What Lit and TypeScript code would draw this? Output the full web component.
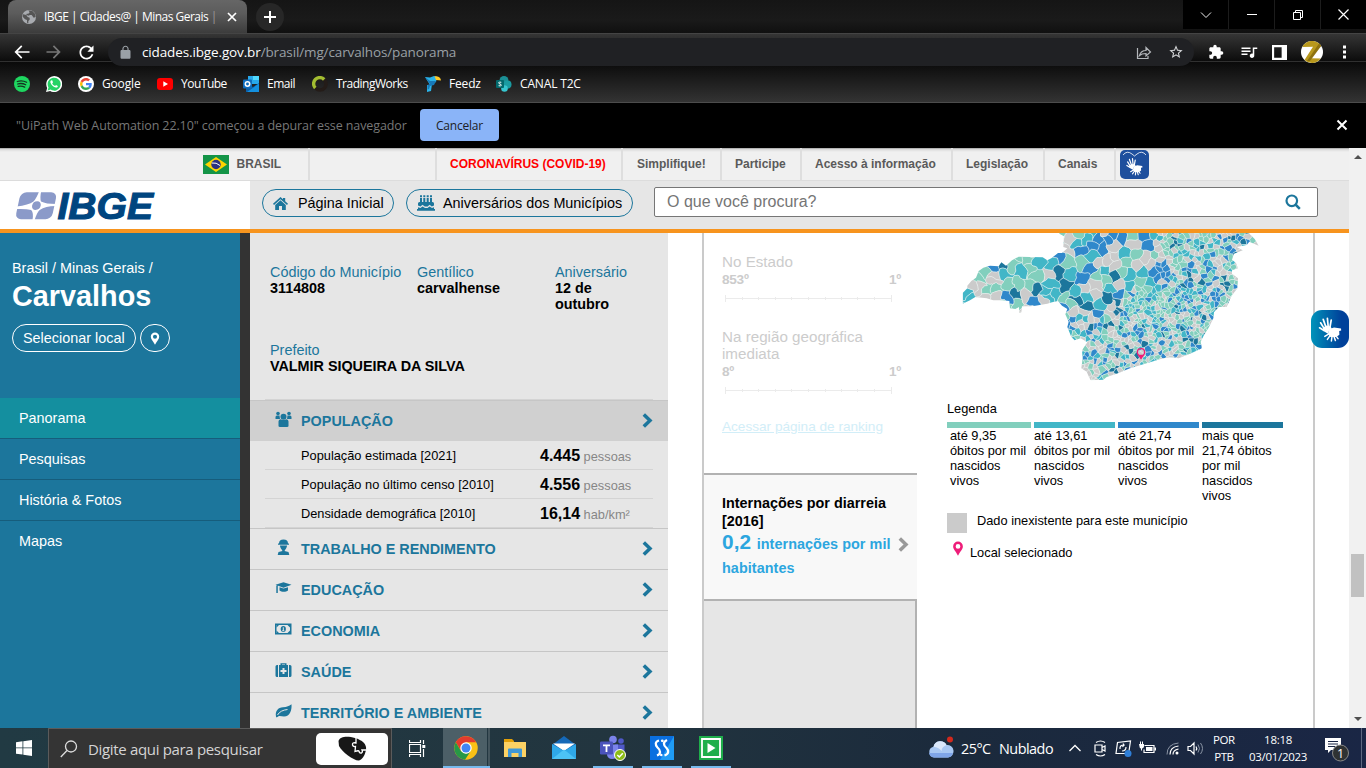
import { LitElement, html, svg, css } from "lit";
import { customElement } from "lit/decorators.js";

type Pt = [number, number];

const G = "#82cfbd", T = "#42b6c7", B = "#3088cb", D = "#1c769c", N = "#cbcbcb";

const OUTLINE: Pt[] = [
  [388, 10], [388, 26], [402, 34], [400, 66], [412, 70], [396, 84], [384, 84], [364, 100], [352, 106], [338, 97], [300, 96],
  [266, 95], [246, 106], [228, 122], [214, 112], [206, 124], [180, 122], [160, 128], [146, 138], [138, 158], [124, 168],
  [112, 182], [112, 190], [98, 204], [98, 236], [120, 226], [136, 216], [170, 220], [190, 226], [216, 226], [238, 228],
  [240, 250], [256, 252], [267, 246], [268, 264], [274, 262], [276, 244], [300, 244], [316, 242], [352, 236], [366, 232],
  [384, 228], [396, 242], [412, 252], [406, 268], [416, 290], [412, 306], [424, 336], [434, 346], [452, 340], [472, 352],
  [456, 376], [458, 400], [454, 430], [470, 440], [476, 454], [482, 466], [520, 464], [530, 456], [560, 446], [600, 430],
  [660, 412], [700, 400], [720, 397], [746, 400], [780, 386], [816, 370], [812, 350], [822, 330], [836, 308], [850, 280],
  [852, 262], [866, 246], [890, 246], [904, 214], [922, 190], [924, 160], [906, 146], [906, 136], [924, 130], [918, 114],
  [906, 104], [912, 86], [938, 76], [920, 66], [950, 60], [958, 50], [986, 62], [974, 42], [956, 24], [956, 10],
];

const PLACES: [number, number, string][] = [
  [112, 210, T], [128, 182, N], [152, 184, N], [160, 145, G], [195, 150, N], [217, 122, D], [200, 190, G], [222, 150, T],
  [250, 118, G], [262, 180, G], [275, 132, T], [300, 185, G], [320, 150, G], [328, 110, T], [230, 214, B], [195, 214, N],
  [258, 204, D], [264, 238, G], [292, 210, N], [318, 198, D], [316, 230, B], [348, 200, T], [360, 150, N], [370, 118, T],
  [340, 232, N], [378, 210, T], [384, 142, D], [366, 178, T], [120, 222, T], [292, 104, G], [235, 180, G], [175, 190, G],
  [150, 160, G], [302, 130, G], [355, 218, T], [195, 168, N],
  [395, 22, G], [420, 45, N], [440, 60, T], [448, 78, B], [415, 105, G], [384, 94, B], [472, 40, T], [505, 40, B], [532, 42, B],
  [520, 66, B], [574, 36, B], [490, 90, T], [458, 115, G], [420, 148, T], [455, 162, B], [482, 130, B], [410, 184, D],
  [400, 220, G], [436, 224, D], [470, 244, D], [422, 238, G], [462, 192, N], [500, 215, N], [500, 180, N], [525, 140, T],
  [548, 90, N], [555, 122, N], [585, 85, T], [620, 90, G], [610, 55, N], [660, 60, B], [680, 90, G], [555, 158, D],
  [600, 150, T], [570, 182, N], [535, 215, D], [568, 206, B], [640, 140, T], [645, 30, B], [605, 34, G], [430, 262, N],
  [460, 262, N], [505, 270, B], [512, 240, T], [545, 195, T], [505, 150, G], [550, 30, B], [490, 60, B], [536, 104, N],
  [735, 52, D], [765, 50, G], [800, 35, N], [712, 72, G], [690, 42, T], [718, 32, G], [815, 68, D], [786, 70, G],
  [840, 60, T], [860, 84, G], [886, 45, B], [930, 42, B], [968, 50, G], [910, 78, B], [890, 98, B], [856, 130, B],
  [832, 134, B], [700, 150, B], [684, 160, B], [716, 146, B], [690, 132, B], [882, 156, D], [880, 178, D], [908, 172, G],
  [900, 205, G], [875, 235, G], [765, 135, B], [718, 372, T], [650, 330, G], [655, 375, B], [640, 356, D], [790, 360, B],
  [806, 366, B], [730, 258, T], [585, 266, B], [545, 298, D], [560, 310, G], [755, 68, G], [770, 30, G], [876, 66, B],
];

function makeRandom(seed: number) {
  let s = seed;
  return () => {
    s = (s * 1664525 + 1013904223) >>> 0;
    return s / 4294967296;
  };
}

function spacing(x: number, y: number): number {
  if (x < 400) return 30;
  if (y < 190 && x < 670) return 26;
  if (x < 560 && y < 280) return 20;
  if (x < 560 && y < 330) return 13;
  if (y < 190) return 11.5;
  if (x > 560 && y < 350) return 8.6;
  return 10;
}

function tint(x: number, y: number, r: number): string {
  const near = (cx: number, cy: number, d: number) => Math.hypot(x - cx, y - cy) < d;
  if (near(840, 205, 30) || near(700, 150, 38)) return r < 0.7 ? B : r < 0.84 ? T : N;
  if (near(660, 225, 75)) return r < 0.5 ? G : r < 0.76 ? T : r < 0.92 ? N : B;
  if (y < 190) return r < 0.36 ? N : r < 0.64 ? G : r < 0.78 ? T : r < 0.91 ? B : D;
  return r < 0.34 ? N : r < 0.6 ? G : r < 0.77 ? T : r < 0.93 ? B : D;
}

/** Bends a point so that borders meander instead of running straight. */
function bend([x, y]: Pt): Pt {
  const a = x < 560 && y < 250 ? 4.2 : 2.3;
  return [
    x + a * (Math.sin(y / 6.1 + x / 17) + 0.7 * Math.sin(x / 4.3 - y / 9.7)),
    y + a * (Math.sin(x / 6.7 - y / 15) + 0.7 * Math.sin(y / 4.7 + x / 11.3)),
  ];
}

/** Splits the state into one polygon per municipality (nearest-seat cells). */
function municipalities(): { points: string; fill: string }[] {
  const rand = makeRandom(31148);
  const sites: { x: number; y: number; c: string; m: number }[] = PLACES.map(([x, y, c]) => ({
    x, y, c, m: y < 250 && x < 670 ? 25 : 11,
  }));
  for (let i = 0; i < 14000; i++) {
    const x = 90 + rand() * 900, y = 15 + rand() * 460, r = rand();
    const base = spacing(x, y);
    const d = base * (base > 18 ? 1 : 0.65 + 0.8 * rand());
    if (sites.every((s) => Math.hypot(s.x - x, s.y - y) > Math.max(d, s.m))) {
      sites.push({ x, y, c: tint(x, y, r), m: d * 0.8 });
    }
  }
  return sites.map((a) => {
    let poly: Pt[] = [[a.x - 60, a.y - 60], [a.x + 60, a.y - 60], [a.x + 60, a.y + 60], [a.x - 60, a.y + 60]];
    for (const b of sites) {
      if (a === b || Math.abs(a.x - b.x) > 110 || Math.abs(a.y - b.y) > 110) continue;
      const nx = b.x - a.x, ny = b.y - a.y;
      const k = (nx * (a.x + b.x) + ny * (a.y + b.y)) / 2;
      const out: Pt[] = [];
      for (let i = 0; i < poly.length; i++) {
        const p = poly[i], q = poly[(i + 1) % poly.length];
        const dp = nx * p[0] + ny * p[1] - k, dq = nx * q[0] + ny * q[1] - k;
        if (dp <= 0) out.push(p);
        if (dp < 0 !== dq < 0) {
          const t = dp / (dp - dq);
          out.push([p[0] + t * (q[0] - p[0]), p[1] + t * (q[1] - p[1])]);
        }
      }
      poly = out;
    }
    const fine: Pt[] = [];
    poly.forEach((p, i) => {
      const q = poly[(i + 1) % poly.length];
      for (let k = 0; k < 4; k++) fine.push(bend([p[0] + (k / 4) * (q[0] - p[0]), p[1] + (k / 4) * (q[1] - p[1])]));
    });
    return { points: fine.map((p) => `${p[0].toFixed(1)},${p[1].toFixed(1)}`).join(" "), fill: a.c };
  });
}

const CELLS = municipalities();

const hands = svg`
  <path d="M7.2 12.6 3.6 6.8M9 11.2 6.2 3.4M11.2 10.6 10.4 2.4M13 11 14.2 4.2M7 14.5 2.6 11.8" stroke="#fff" stroke-width="1.7" stroke-linecap="round" fill="none"/>
  <path d="M6 12 9 9.600l4.600.8 1.400 2.600-2.600.6-1.400 4.200-3.800-2.200z" fill="#fff"/>
  <path d="M12 13.200 17 11.500l7 1 .2 2-2 .6.200 3.600-3.200 2.400-5.800-.2-2.400-3z" fill="#fff"/>
  <path d="M12.400 17.600 7.800 20.400M13.200 19.400 10.400 23.400M15 20.400 14.400 25M17 20.400 18.400 24.600M18.600 19.400 21 22.600" stroke="#fff" stroke-width="1.500" stroke-linecap="round" fill="none"/>`;

const icon = (size: number, box: string, body: unknown) =>
  html`<svg width=${size} height=${size} viewBox=${box} aria-hidden="true">${body}</svg>`;
const glyph = (size: number, d: string, fill = "#fff") => icon(size, "0 0 24 24", svg`<path fill=${fill} d=${d}/>`);

const chevron = html`<svg width="11" height="15" viewBox="0 0 11 15"><path d="M1.800 1.500 8 7.500l-6.200 6" fill="none" stroke="currentColor" stroke-width="3.500"/></svg>`;

const pin = (w: number, h: number, fill: string) =>
  html`<svg width=${w} height=${h} viewBox="0 0 12 16"><path fill=${fill} fill-rule="evenodd" d="M6 .6A5.200 5.200 0 0 0 .8 5.800C.8 8.600 3.600 11 6 15.600 8.400 11 11.200 8.600 11.200 5.800A5.200 5.200 0 0 0 6 .6zM6 3.300a2.500 2.500 0 1 1 0 5 2.500 2.500 0 0 1 0-5z"/></svg>`;

@customElement("browser-chrome")
class BrowserChrome extends LitElement {
  static styles = css`
    :host { display: block; width: 1366px; height: 148px; background: #000; font-family: "Open Sans", "Noto Sans", sans-serif; color: #fff; font-size: 12px; }
    svg { display: block; flex: none; }
    .strip { display: flex; height: 33px; background: linear-gradient(#151515, #1a1a1a 60%, #101010); }
    .tab { margin-left: 8px; width: 239px; height: 33px; box-sizing: border-box; border-radius: 8px 8px 0 0; background: linear-gradient(#666, #5c5c5c 40%, #3c3c3c); display: grid; grid-template-columns: 23px 182px 12px; align-items: center; padding-left: 13px; }
    .title { white-space: nowrap; letter-spacing: -0.52px; }
    .dim { color: #9a9a9a; }
    .plus { margin: 3px 0 0 9px; width: 28px; height: 28px; border-radius: 50%; background: #272727; display: grid; place-items: center; }
    .controls { margin-left: auto; display: grid; grid-template-columns: repeat(4, 45px); column-gap: 1px; height: 29px; background: #1c1c1c; }
    .control { background: #000; display: grid; place-items: center; }
    .bars { height: 70px; box-sizing: border-box; border-top: 1px solid #444; border-bottom: 1px solid #4c4c4c; background: linear-gradient(#353535, #0c0c0c 27px, #303030 27px, #303030 28px, #0a0a0a 28px, #333 68px); }
    .toolbar { display: grid; grid-template-columns: 32px 32px 32px 1086px 172px; padding: 4px 0 0 12px; height: 28px; align-items: center; }
    .omnibox { height: 28px; border-radius: 14px; background: #202124; display: flex; align-items: center; }
    .lock { margin: 0 9px 0 10px; }
    .url { font-size: 13.500px; color: #9aa0a6; letter-spacing: -0.13px; white-space: nowrap; }
    .host { color: #fff; }
    .actions { margin-left: auto; display: flex; gap: 16px; margin-right: 10px; }
    .tools { display: grid; grid-template-columns: 32px 32px 29px 35px 24px; width: 160px; padding-left: 14px; align-items: center; }
    .marks { display: grid; grid-template-columns: 32px 32px 79px 86px 69px 113px 71px 100px; padding: 0 0 0 14px; height: 35px; align-items: center; }
    .mark { display: flex; align-items: center; gap: 8px; white-space: nowrap; letter-spacing: -0.16px; }
    .tight { letter-spacing: -0.5px; }
    .info { height: 45px; box-sizing: border-box; display: flex; align-items: center; padding: 0 16px 1px; }
    .message { color: #777; font-size: 12.500px; letter-spacing: -0.1px; width: 404px; white-space: nowrap; }
    .cancel { width: 79px; height: 32px; border-radius: 4px; background: #8ab4f8; color: #202124; display: grid; place-items: center; letter-spacing: -0.2px; }
    .close { margin-left: auto; margin-right: 2px; }
  `;

  render() {
    return html`
      <div class="strip">
        <div class="tab">
          ${icon(16, "0 0 24 24", svg`<circle cx="12" cy="12" r="10.500" fill="#a8abb0"/><path fill="#555" d="M3 8l5 1 2 3 3 1v3l-2 2v3.500l-2-1v-4l-3-1-3.500-4zM11 2l2 3-2 2H8.500L8 9l4 1 1-1h3l3 4 3-1-1-5-4-4z"/>`)}
          <span class="title">IBGE | Cidades@ | Minas Gerais <span class="dim">|</span></span>
          ${icon(12, "0 0 12 12", svg`<path d="M2 2l8 8M10 2l-8 8" stroke="#fff" stroke-width="1.700"/>`)}
        </div>
        <div class="plus">${icon(12, "0 0 12 12", svg`<path d="M6 0v12M0 6h12" stroke="#fff" stroke-width="2"/>`)}</div>
        <div class="controls">
          <div class="control">${icon(12, "0 0 12 12", svg`<path d="M1 3.500l5 5 5-5" stroke="#eee" fill="none"/>`)}</div>
          <div class="control">${icon(10, "0 0 10 10", svg`<path d="M0 4.500h10" stroke="#fff"/>`)}</div>
          <div class="control">${icon(10, "0 0 10 10", svg`<path d="M.5 2.500h7v7h-7zM2.500 2.500v-2h7v7h-2" stroke="#fff" fill="none"/>`)}</div>
          <div class="control">${icon(11, "0 0 11 11", svg`<path d="M.5.500l10 10M10.500.500l-10 10" stroke="#fff" stroke-width="1.200"/>`)}</div>
        </div>
      </div>
      <div class="bars">
        <div class="toolbar">
          ${glyph(20, "M21 11H6.830l5.590-5.590L11 4l-8 8 8 8 1.410-1.410L6.830 13H21v-2z")}
          ${glyph(20, "M12 4l-1.410 1.410L16.170 11H3v2h13.170l-5.580 5.590L12 20l8-8z", "#777")}
          ${glyph(21, "M17.650 6.350C16.200 4.900 14.210 4 12 4c-4.420 0-7.990 3.580-7.990 8s3.570 8 7.990 8c3.730 0 6.840-2.550 7.730-6h-2.080c-.82 2.330-3.040 4-5.650 4-3.310 0-6-2.690-6-6s2.690-6 6-6c1.660 0 3.140.69 4.220 1.780L13 11h7V4l-2.350 2.350z")}
          <div class="omnibox">
            <span class="lock">${glyph(15, "M18 8h-1V6c0-2.760-2.240-5-5-5S7 3.240 7 6v2H6c-1.100 0-2 .9-2 2v10c0 1.100.9 2 2 2h12c1.100 0 2-.9 2-2V10c0-1.100-.9-2-2-2zM15.100 8H8.900V6c0-1.710 1.390-3.100 3.100-3.100s3.100 1.390 3.100 3.100v2z", "#9aa0a6")}</span>
            <span class="url"><span class="host">cidades.ibge.gov.br</span>/brasil/mg/carvalhos/panorama</span>
            <span class="actions">
              ${icon(16, "0 0 16 16", svg`<path d="M1.500 4v10.500H12V12M3.500 11.500C4.500 8 7 6.500 10 6.500V3.500L14.500 8 10 12V9.500c-3 0-5 .5-6.500 2z" fill="none" stroke="#b4b7bb" stroke-width="1.200"/>`)}
              ${glyph(16, "M22 9.240l-7.190-.62L12 2 9.190 8.630 2 9.240l5.460 4.730L5.820 21 12 17.270 18.180 21l-1.630-7.030L22 9.240zM12 15.400l-3.760 2.270 1-4.280-3.320-2.880 4.380-.38L12 6.100l1.710 4.040 4.380.38-3.320 2.880 1 4.280L12 15.400z", "#d4d6d8")}
            </span>
          </div>
          <div class="tools">
            ${glyph(16, "M20.500 11H19V7c0-1.100-.9-2-2-2h-4V3.500a2.500 2.500 0 0 0-5 0V5H4c-1.100 0-1.990.9-1.990 2v3.800H3.500c1.490 0 2.700 1.210 2.700 2.700s-1.210 2.700-2.700 2.700H2V20c0 1.100.9 2 2 2h3.800v-1.500c0-1.490 1.210-2.700 2.700-2.700s2.700 1.210 2.700 2.700V22H17c1.100 0 2-.9 2-2v-4h1.500a2.500 2.500 0 0 0 0-5z")}
            ${glyph(18, "M14 6H2v2h12V6zm0 4H2v2h12v-2zM2 16h8v-2H2v2zM17 6v8.180c-.31-.11-.65-.18-1-.18-1.660 0-3 1.340-3 3s1.340 3 3 3 3-1.340 3-3V8h4V6h-6z")}
            ${icon(15, "0 0 14 14", svg`<path fill="#fff" fill-rule="evenodd" d="M0 0h14v14H0zM2 2v10h7V2z"/>`)}
            ${icon(22, "0 0 22 22", svg`<circle cx="11" cy="11" r="11" fill="#fff"/><path d="M2 4.600A11 11 0 0 1 20 4.600L10 17.200l9.800.4A11 11 0 0 1 3.500 19L12 5.800 1.500 6z" fill="#b8981c"/><path d="M18 2.500 6 20h3L20.200 5z" fill="#8d7210"/>`)}
            ${icon(16, "0 0 16 16", svg`<path fill="#fff" d="M7 1.500h3v3H7zM7 6.500h3v3H7zM7 11.500h3v3H7z"/>`)}
          </div>
        </div>
        <div class="marks">
          <span class="mark">${icon(16, "0 0 16 16", svg`<circle cx="8" cy="8" r="8" fill="#1ed760"/><path d="M3.300 5.500c3-1 6.500-.7 9.300.8M3.700 8c2.600-.8 5.600-.5 8 .8M4.100 10.400c2.200-.6 4.600-.4 6.600.7" fill="none" stroke="#14351f" stroke-width="1.300" stroke-linecap="round"/>`)}</span>
          <span class="mark">${icon(16, "0 0 16 16", svg`<path d="M0 16l1.200-4.100A8 8 0 1 1 4.200 15z" fill="#fff"/><path d="M1.600 14.400l.9-3A6.500 6.500 0 1 1 4.600 13.600z" fill="#25d366"/><path d="M5.600 4.300c-.8 0-1.500 1.200-1.200 2.300.7 2.500 3 4.700 5.500 5 1 .1 2-.6 1.900-1.600l-1.800-.9-.9 1c-1.300-.5-2.400-1.500-2.900-2.800l.8-.9-.6-1.900z" fill="#fff"/>`)}</span>
          <span class="mark">${icon(16, "0 0 48 48", svg`<circle cx="24" cy="24" r="24" fill="#fff"/><g transform="translate(6 6) scale(.75)"><path fill="#EA4335" d="M24 9.500c3.540 0 6.710 1.220 9.210 3.600l6.850-6.850C35.900 2.380 30.470 0 24 0 14.620 0 6.510 5.380 2.560 13.220l7.980 6.190C12.430 13.720 17.740 9.500 24 9.500z"/><path fill="#4285F4" d="M46.980 24.550c0-1.570-.15-3.090-.38-4.550H24v9.020h12.940c-.58 2.960-2.260 5.480-4.780 7.180l7.730 6c4.510-4.180 7.090-10.360 7.090-17.650z"/><path fill="#FBBC05" d="M10.530 28.590a14.500 14.500 0 0 1 0-9.180l-7.980-6.190a24 24 0 0 0 0 21.560l7.980-6.190z"/><path fill="#34A853" d="M24 48c6.480 0 11.930-2.130 15.890-5.810l-7.730-6c-2.150 1.450-4.920 2.300-8.160 2.300-6.260 0-11.570-4.220-13.470-9.910l-7.980 6.190C6.510 42.620 14.620 48 24 48z"/></g>`)}Google</span>
          <span class="mark tight">${icon(16, "0 0 16 16", svg`<rect y="2" width="16" height="12" rx="3" fill="#f00"/><path d="M6.300 5.300v5.400L11 8z" fill="#fff"/>`)}YouTube</span>
          <span class="mark tight">${icon(16, "0 0 16 16", svg`<path fill="#28a8ea" d="M5 0h11v8H5z"/><path fill="#50d9ff" d="M10 0h6v4h-6z"/><path fill="#0a5ea8" d="M3 7l7 4 6-4v9H3z"/><path fill="#1490df" d="M16 7.500V16H4z"/><rect y="3.500" width="9" height="9" rx="1" fill="#0f6cbd"/><circle cx="4.500" cy="8" r="2.200" fill="none" stroke="#fff" stroke-width="1.500"/>`)}Email</span>
          <span class="mark tight">${icon(16, "0 0 16 16", svg`<circle cx="8" cy="8" r="6" fill="none" stroke="#241c18" stroke-width="3.600"/><path d="M3.300 12A6 6 0 0 1 12.200 3.500" fill="none" stroke="#a3bd31" stroke-width="3.400"/>`)}TradingWorks</span>
          <span class="mark">${icon(16, "0 0 16 16", svg`<path fill="#2bb3e8" d="M0 1 5 1.500 9 0l3 1-1 5-4 2-1 7-4 1V9h3z"/><path fill="#1779b8" d="M0 1l5 4h6l-2 4-4 1-1 3-1.500.5V9L5 8z"/><path fill="#ffc928" d="M9.500.2C13 0 15.500 1 16 4.500L11 4z"/>`)}Feedz</span>
          <span class="mark">${icon(16, "0 0 16 16", svg`<circle cx="8" cy="4.500" r="4.500" fill="#1b8f95"/><circle cx="11.500" cy="8.500" r="4" fill="#1a9ba1"/><circle cx="8.500" cy="12.500" r="3.300" fill="#37c6d0"/><rect y="4" width="8" height="8" rx="1" fill="#03696d"/><path d="M5.300 6.300q-2.600-.8-2.600.5 0 .9 1.300 1.200t1.300 1.200q0 1.300-2.700.5" fill="none" stroke="#fff" stroke-width="1"/>`)}CANAL T2C</span>
        </div>
      </div>
      <div class="info">
        <span class="message">"UiPath Web Automation 22.10" começou a depurar esse navegador</span>
        <span class="cancel">Cancelar</span>
        <span class="close">${icon(12, "0 0 12 12", svg`<path d="M1.500 1.500l9 9M10.500 1.500l-9 9" stroke="#fff" stroke-width="2"/>`)}</span>
      </div>`;
  }
}

@customElement("ibge-map")
class IbgeMap extends LitElement {
  static styles = css`
    :host { display: block; }
    .state { display: block; width: 300px; height: 150px; }
  `;
  render() {
    return html`<svg class="state" viewBox="90 24 900 450">
      <defs><clipPath id="border"><polygon points=${OUTLINE.map((p) => p.join(",")).join(" ")}/></clipPath></defs>
      <g clip-path="url(#border)" stroke="#ecf5f3" stroke-opacity=".8" stroke-width="1.800" stroke-linejoin="round">
        ${CELLS.map((c) => svg`<polygon points=${c.points} fill=${c.fill}/>`)}
      </g>
      <path d="M633 371c-7 0-11 5-11 11 0 7 6 10 11 18 5-8 11-11 11-18 0-6-4-11-11-11z" fill="none" stroke="#ee1d79" stroke-width="4"/>
      <path d="M626 389h14l-7 13z" fill="#ee1d79"/>
    </svg>`;
  }
}

@customElement("ibge-page")
class IbgePage extends LitElement {
  static styles = css`
    :host { display: flex; flex-direction: column; width: 1349px; height: 580px; position: relative; overflow: hidden; background: #fff; font-family: "Liberation Sans", Arial, sans-serif; font-size: 14.400px; color: #000; }
    svg { display: block; flex: none; overflow: visible; }
    .gov { height: 33px; box-sizing: border-box; border-bottom: 1px solid #dcdcdc; background: linear-gradient(#8f8f8f, #d8d8d8 1px, #f0f0f0 4px); display: grid; grid-template-columns: 310px 127px 186px 99px 80px 151px 92px 71px 1fr; font-size: 12px; font-weight: bold; color: #5a5a5a; flex: none; }
    .cell { border-right: 2px solid #dedede; padding-left: 13px; line-height: 32px; white-space: nowrap; }
    .cell:first-child { padding-left: 203px; display: flex; align-items: center; gap: 7.500px; }
    .alert { color: #f00; }
    .wide { padding-left: 14px; }
    .access { padding: 2px 0 0 4px; }
    .head { height: 48px; display: flex; background: #e6e6e6; border-bottom: 4px solid #f7941e; flex: none; }
    .brand { width: 250px; background: #fff; box-sizing: border-box; padding: 9px 0 0 15px; }
    .word { font: italic bold 37.500px "Liberation Sans", Arial, sans-serif; }
    .pill { box-sizing: border-box; height: 28px; border: 1px solid #1c769c; border-radius: 14px; display: flex; align-items: center; margin: 8px 0 0 12px; white-space: nowrap; }
    .start { width: 132px; padding-left: 10px; gap: 10px; }
    .births { width: 227px; padding-left: 10px; gap: 8px; }
    .search { margin: 6px 0 0 21px; width: 664px; height: 30px; box-sizing: border-box; border: 1px solid #767676; border-radius: 2px; background: #fff; padding: 0 16px 0 12px; display: flex; align-items: center; justify-content: space-between; font-size: 16px; color: #757575; }
    .body { flex: 1; display: grid; grid-template-columns: 250px 418px 34px 215px 398px; min-height: 0; }
    .side { border-right: 10px solid #333; background: #1c769c; color: #fff; }
    .where { height: 165px; box-sizing: border-box; padding: 27px 0 0 12px; }
    .trail { line-height: 17px; }
    .city { font-size: 28.800px; font-weight: bold; line-height: 34px; margin-top: 2px; }
    .row { display: flex; gap: 4px; margin-top: 11px; }
    .local { box-sizing: border-box; height: 28px; border: 1px solid #fff; border-radius: 14px; line-height: 26px; width: 124px; padding-left: 10px; white-space: nowrap; }
    .locate { box-sizing: border-box; height: 28px; width: 30px; border: 1px solid #fff; border-radius: 14px; display: grid; place-items: center; }
    .nav { height: 40px; line-height: 40px; padding-left: 19px; border-bottom: 1px solid #165d7c; }
    .nav:last-child { border: 0; }
    .on { background: #148f9f; }
    .facts { background: #e6e6e6; overflow: hidden; }
    .ids { height: 167px; margin: 0 15px; box-sizing: border-box; padding: 31px 0 0 5px; border-bottom: 1px solid #d4d4d4; }
    .trio { display: grid; grid-template-columns: 147px 138px 80px; height: 78px; line-height: 16px; }
    .mayor { line-height: 16px; }
    .key { color: #1c769c; }
    .val { font-weight: bold; letter-spacing: -0.03px; }
    .topic { height: 40px; border-top: 1px solid #c6c6c6; display: grid; grid-template-columns: 26px 341px 20px; padding-left: 25px; align-items: center; color: #1c769c; font-weight: bold; }
    .topic svg { margin-top: -3px; }
    .topic svg:last-child { margin-top: -1px; }
    .open { background: #d0d0d0; }
    .line { margin: 0 15px; height: 28px; border-bottom: 1px solid #d4d4d4; display: grid; grid-template-columns: 239px 1fr; padding-left: 36px; line-height: 29px; font-size: 12.800px; white-space: nowrap; }
    .num { font-size: 16px; font-weight: bold; }
    .unit { color: #868686; }
    .ranks { border-left: 2px solid #cacaca; display: flex; flex-direction: column; min-height: 0; }
    .faded { box-sizing: border-box; padding: 21px 15px 0 18px; color: #ccc; font-size: 15.200px; line-height: 17px; flex: none; border-bottom: 2px solid #b2b2b2; height: 242px; }
    .place { height: 17px; line-height: 16px; }
    .two { height: 35px; line-height: 17px; }
    .span { display: flex; justify-content: space-between; font-size: 13.600px; font-weight: bold; letter-spacing: -0.25px; height: 18px; line-height: 17px; padding-right: 1px; }
    .ruler { margin: 6px 0 0 3px; }
    .gap { height: 26px; }
    .link { color: #d2eef8; text-decoration: underline; font-size: 13.600px; margin-top: 25px; line-height: 16px; white-space: nowrap; }
    .pick { background: #f8f8f8; height: 124px; border-bottom: 2px solid #b2b2b2; flex: none; padding: 0 8px 0 18px; display: flex; align-items: center; justify-content: space-between; color: #999; }
    .pick svg { margin-top: 15px; }
    .what { width: 172px; font-weight: bold; color: #000; line-height: 18px; margin-top: -1px; white-space: nowrap; }
    .amount { color: #2ca6df; line-height: 24px; letter-spacing: 0.06px; }
    .big { font-size: 20.800px; margin-right: 1.500px; }
    .rest { flex: 1; background: #e6e6e6; border-right: 2px solid #b2b2b2; }
    .chart { border-right: 2px solid #cacaca; padding-left: 30px; font-size: 12.800px; }
    .chart ibge-map { margin-left: 13px; height: 168px; }
    .scale { display: grid; grid-template-columns: 84px 81px 81px 81px; column-gap: 3px; margin-top: 6px; line-height: 15px; height: 91px; white-space: nowrap; }
    .bar { height: 6px; }
    .c1 { background: #82cfbd; } .c2 { background: #42b6c7; } .c3 { background: #3088cb; } .c4 { background: #1c769c; }
    .first { padding-left: 3px; }
    .none { display: flex; gap: 10px; align-items: flex-start; line-height: 15px; height: 28px; }
    .swatch { width: 20px; height: 20px; background: #cbcbcb; }
    .mine { display: flex; gap: 6px; padding-left: 5px; line-height: 23px; }
    .vlibras { position: absolute; right: 0; top: 162px; width: 38px; height: 38px; border-radius: 11px; background: linear-gradient(90deg, #0093ba, #00419a 80%); display: grid; place-items: center; }
  `;

  render() {
    const blue = "#1c769c";
    const hole = "#e6e6e6";
    const topics: [string, unknown][] = [
      ["TRABALHO E RENDIMENTO", svg`<path fill=${blue} d="M4 4.500C4 2 5.500.5 8.500.5S13 2 13 4.500h1v1.300H3V4.500zM5 6.500h7c0 2-1 3-1.500 3.800L9.500 12l4 1 .8 3H2.700l.8-3 4-1-1-1.700C6 9.500 5 8.500 5 6.500z"/>`],
      ["EDUCAÇÃO", svg`<path fill=${blue} d="M.5 4.800 8.500 2.200l8 2.600-8 2.900zM4.500 7.200l4 1.300 4.500-1.300v3.300c-2 1.700-6.500 1.700-8.500 0zM1.300 5.500h1.500V13H1.300z"/>`],
      ["ECONOMIA", svg`<path fill=${blue} fill-rule="evenodd" d="M0 2.500h16.500v11H0zM1.500 4v8H15V4z"/><path fill=${blue} d="M1.500 4H4L1.500 6.500zM15 4h-2.500L15 6.500zM1.500 12H4L1.500 9.500zM15 12h-2.500L15 9.500z"/><ellipse cx="8.300" cy="8" rx="2.600" ry="3" fill=${blue}/><path stroke=${hole} d="M8.300 6.300v3.400M7.300 9.700h2"/>`],
      ["SAÚDE", svg`<path fill=${blue} fill-rule="evenodd" d="M5.500 3V1.200h6V3H13v12H4V3zM7 2.500V3h3v-.5zM.5 4.500Q.5 3 2 3h1v12H2q-1.500 0-1.500-1.500zM14 3h1q1.500 0 1.500 1.500v9Q16.500 15 15 15h-1z"/><path stroke="#e6e6e6" stroke-width="2" d="M8.500 6v6M5.500 9h6"/>`],
      ["TERRITÓRIO E AMBIENTE", svg`<path fill=${blue} d="M1 13.500C0 8 3 4.500 8 4.200 12 4 14 3 16.500 1.200 17 7 15 13.500 9 13.500c-2 0-4-.8-5.500-.3-1 .8-1.500 1.300-2.500 1z"/><path fill="none" stroke=${hole} d="M2.500 12C4.500 8.500 8 7 12.500 6.500"/>`],
    ];
    const ruler = html`<svg class="ruler" width="167" height="7" viewBox="0 0 167 7"><path d="M.5 0v7M166.500 0v7M0 3.500h167M17.500 2v3M33.500 2v3M50.500 2v3M66.500 2v3M83.500 2v3M100.500 2v3M116.500 2v3M132.500 2v3M149.500 2v3" stroke="#ebebeb" fill="none"/></svg>`;
    return html`
      <div class="gov">
        <div class="cell"><svg width="26" height="19" viewBox="0 0 26 19"><path fill="#149447" d="M0 0h26v19H0z"/><path fill="#ffd400" d="M2 9.500 13 2l11 7.500L13 17z"/><circle cx="13" cy="9.500" r="4.700" fill="#2b3180"/><path d="M8.800 8q4.500-.8 8.200 2.500" stroke="#fff" fill="none"/></svg>BRASIL</div>
        <div class="cell"></div>
        <div class="cell alert">CORONAVÍRUS (COVID-19)</div>
        <div class="cell wide">Simplifique!</div>
        <div class="cell">Participe</div>
        <div class="cell">Acesso à informação</div>
        <div class="cell">Legislação</div>
        <div class="cell">Canais</div>
        <div class="access"><svg width="29" height="29" viewBox="0 0 29 29"><rect width="29" height="29" rx="5" fill="#1e4f9d"/><path d="M3 5q4-5 9-1M26 5q-4-5-9-1M12 4l2.500 2L17 4" stroke="#fff" stroke-width=".8" fill="none"/><g transform="translate(5 7) scale(.72)">${hands}</g></svg></div>
      </div>
      <div class="head">
        <div class="brand"><svg width="142" height="32" viewBox="0 0 142 32">
          <g transform="translate(0 2) skewX(-12) translate(5.500 0)">
            <rect x=".3" y=".3" width="36.500" height="27" rx="6" fill="#8b9ac9"/>
            <path fill="#fff" d="M-1 14.500Q11 13 15 9.500 17.500 6 18.500-1h2Q20.500 6 22.500 9.500 28 12 38 12v2Q28 14 23 18q-2.500 3-3 11h-2Q18 21 14.500 18 9 16.500-1 17z"/>
            <circle cx="18.800" cy="13.600" r="4.300" fill="#8b9ac9"/>
          </g>
          <text class="word" x="42.500" y="28.800" textLength="95.500" lengthAdjust="spacingAndGlyphs" fill="#00457f" stroke="#00457f" stroke-width="1.100">IBGE</text>
        </svg></div>
        <div class="pill start"><svg width="15" height="13" viewBox="0 0 15 13"><path fill=${blue} d="M7.500 0 10 2.200V1h2.200v3.200L15 6.800l-1 1.200L7.500 2.300 1 8 0 6.800zM7.500 3.300 12.800 8v5H9V9H6v4H2.200V8z"/></svg><span>Página Inicial</span></div>
        <div class="pill births"><svg width="18" height="16" viewBox="0 0 18 16"><path d="M4 3v5M7.300 3v5M10.700 3v5M14 3v5M4 .3v2M7.300.3v2M10.700.3v2M14 .3v2" stroke=${blue} stroke-width="2"/><path fill=${blue} d="M2.500 7h13q1.500 0 1.500 1.500v2l-2.200 1-2.200-1.800-2 1.800H7.800L5.500 9.700l-2 1.800-2.500-1v-2Q1 7 2.500 7zM1 12.200l2.500.8 2-1.600L8 13h2.500l2-1.600L15 13l2-.8V14h1v1.700H0V14h1z"/></svg><span>Aniversários dos Municípios</span></div>
        <div class="search"><span>O que você procura?</span><svg width="16" height="16" viewBox="0 0 16 16"><circle cx="6.800" cy="6.800" r="5.300" fill="none" stroke=${blue} stroke-width="2.200"/><path d="M10.500 10.500l4.300 4.300" stroke=${blue} stroke-width="2.500"/></svg></div>
      </div>
      <div class="body">
        <div class="side">
          <div class="where">
            <div class="trail">Brasil / Minas Gerais /</div>
            <div class="city">Carvalhos</div>
            <div class="row"><span class="local">Selecionar local</span><span class="locate">${pin(10, 13, "#fff")}</span></div>
          </div>
          <div class="nav on">Panorama</div>
          <div class="nav">Pesquisas</div>
          <div class="nav">História &amp; Fotos</div>
          <div class="nav">Mapas</div>
        </div>
        <div class="facts">
          <div class="ids">
            <div class="trio">
              <div><div class="key">Código do Município</div><div class="val">3114808</div></div>
              <div><div class="key">Gentílico</div><div class="val">carvalhense</div></div>
              <div><div class="key">Aniversário</div><div class="val">12 de outubro</div></div>
            </div>
            <div class="mayor"><div class="key">Prefeito</div><div class="val">VALMIR SIQUEIRA DA SILVA</div></div>
          </div>
          <div class="topic open">
            ${icon(17, "0 0 17 17", svg`<path fill=${blue} d="M3.500 10.500q0-2 2-2.200 3 1.500 6 0 2 .2 2 2.200V15q0 1-1.500 1H5q-1.500 0-1.500-1zM.5 6q0-1.300 1.500-1.500h2.500L5 8H.5zM16.500 6q0-1.300-1.500-1.500h-2.500L12 8h4.500z"/><circle cx="8.500" cy="5.800" r="3" fill=${blue}/><circle cx="3" cy="2.500" r="1.800" fill=${blue}/><circle cx="14" cy="2.500" r="1.800" fill=${blue}/>`)}
            <span>POPULAÇÃO</span>${chevron}
          </div>
          <div class="line"><span>População estimada [2021]</span><span><span class="num">4.445</span> <span class="unit">pessoas</span></span></div>
          <div class="line"><span>População no último censo [2010]</span><span><span class="num">4.556</span> <span class="unit">pessoas</span></span></div>
          <div class="line"><span>Densidade demográfica [2010]</span><span><span class="num">16,14</span> <span class="unit">hab/km²</span></span></div>
          ${topics.map(([name, body]) => html`<div class="topic">${icon(17, "0 0 17 17", body)}<span>${name}</span>${chevron}</div>`)}
        </div>
        <div></div>
        <div class="ranks">
          <div class="faded">
            <div class="place">No Estado</div>
            <div class="span"><span>853º</span><span>1º</span></div>
            ${ruler}
            <div class="gap"></div>
            <div class="two">Na região geográfica imediata</div>
            <div class="span"><span>8º</span><span>1º</span></div>
            ${ruler}
            <div class="link">Acessar página de ranking</div>
          </div>
          <div class="pick">
            <div class="what">Internações por diarreia<br>[2016]<div class="amount"><span class="big">0,2</span> internações por mil<br>habitantes</div></div>
            ${chevron}
          </div>
          <div class="rest"></div>
        </div>
        <div class="chart">
          <ibge-map></ibge-map>
          <div>Legenda</div>
          <div class="scale">
            <div><div class="bar c1"></div><div class="first">até 9,35<br>óbitos por mil<br>nascidos<br>vivos</div></div>
            <div><div class="bar c2"></div>até 13,61<br>óbitos por mil<br>nascidos<br>vivos</div>
            <div><div class="bar c3"></div>até 21,74<br>óbitos por mil<br>nascidos<br>vivos</div>
            <div><div class="bar c4"></div>mais que<br>21,74 óbitos<br>por mil<br>nascidos<br>vivos</div>
          </div>
          <div class="none"><span class="swatch"></span><span>Dado inexistente para este município</span></div>
          <div class="mine">${pin(12, 15, "#ee1d79")}<span>Local selecionado</span></div>
        </div>
      </div>
      <div class="vlibras"><svg width="26" height="27" viewBox="0 0 26 27">${hands}</svg></div>`;
  }
}

@customElement("task-bar")
class TaskBar extends LitElement {
  static styles = css`
    :host { display: grid; grid-template-columns: 48px 344px 49px repeat(6, 49px) 226px 108px 25px 21px 24px 27px 21px 26px 36px 74px 38px 5px; height: 40px; width: 1366px; align-items: center; background: linear-gradient(90deg, #213a43, #22353f 45%, #1b2a3c 70%, #1a2645); color: #fff; font-family: "Open Sans", "Noto Sans", sans-serif; font-size: 12px; white-space: nowrap; overflow: hidden; }
    svg { display: block; flex: none; }
    .logo { padding-left: 16px; }
    .find { height: 40px; box-sizing: border-box; background: #343434; border: 1px solid #5b5b5b; border-bottom: 0; display: grid; grid-template-columns: 39px 228px 72px; align-items: center; font-size: 15px; color: #d5d5d5; letter-spacing: -0.33px; }
    .lens { padding-left: 11px; }
    .badge { height: 32px; border-radius: 5px; background: #fff; display: grid; place-items: center; }
    .app { height: 40px; box-sizing: border-box; display: grid; place-items: center; padding-left: 1px; }
    .run { background: linear-gradient(#76b9ed, #76b9ed) 5px 38px / 40px 2px no-repeat; }
    .active { background: linear-gradient(#76b9ed, #76b9ed) 2px 38px / 47px 2px no-repeat, linear-gradient(90deg, #4c5f67 44px, #223640 44px, #223640 45px, #44555d 45px) 2px 0 / 47px 38px no-repeat; }
    .weather { display: flex; justify-content: flex-end; padding-right: 7px; }
    .degrees { display: grid; grid-template-columns: 38px 60px; font-size: 14.400px; letter-spacing: -0.5px; }
    .stack { line-height: 17px; text-align: center; letter-spacing: -0.4px; font-size: 11.500px; justify-self: start; }
    .clock { letter-spacing: -0.3px; }
    .desk { height: 40px; border-left: 1px solid #5d6880; }
  `;

  render() {
    return html`
      <div class="logo">${icon(16, "0 0 16 16", svg`<path fill="#fff" d="M0 2.200 6.500 1.300v6.200H0zM7.300 1.200 16 0v7.500H7.300zM0 8.300h6.500v6.300L0 13.700zM7.300 8.300H16V16l-8.700-1.200z"/>`)}</div>
      <div class="find">
        <span class="lens">${icon(18, "0 0 18 18", svg`<circle cx="11" cy="6.500" r="5.500" fill="none" stroke="#ddd" stroke-width="1.300"/><path d="M7 10.500.8 17" stroke="#ddd" stroke-width="1.300"/>`)}</span>
        <span>Digite aqui para pesquisar</span>
        <span class="badge"><svg width="30" height="26" viewBox="0 0 30 26"><path d="M1.500 5C3 0 11 0 18 2c7 2 12 6 11 12-1 5-4 10-7 10.500C17 25 5 16 2 10z" fill="#171717"/><path d="M19 1.500v5.500q-4-1-3.500 2 .5 2 3 1.500l-.5 5q4-1.500 4 0 .5 2 2.500 1.500 1.500-1 .5-3h4" fill="none" stroke="#fff" stroke-width="1.300"/></svg></span>
      </div>
      <div class="app">${icon(17, "0 0 17 17", svg`<path d="M.5 0v2.500h11V0M.5 4.500h11v8H.5zM.5 17v-2.500h11V17M14.500 0v4M14.500 9v8" fill="none" stroke="#fff" stroke-width="1.200"/><path fill="#fff" d="M13.300 5h3v3h-3z"/>`)}</div>
      <div class="app active">${icon(24, "0 0 48 48", svg`<circle cx="24" cy="24" r="23.500" fill="#fbc116"/><path fill="#e33b2e" d="M24 .5A23.500 23.500 0 0 1 44.400 12.500H24L14 30 3.600 12.400A23.500 23.500 0 0 1 24 .5z"/><path fill="#279847" d="M3.600 12.400 13.800 30 24 35.500l8.500-4-10.500 16A23.500 23.500 0 0 1 3.600 12.400z"/><circle cx="24" cy="24" r="11.500" fill="#fff"/><circle cx="24" cy="24" r="9" fill="#4285f4"/>`)}</div>
      <div class="app">${icon(24, "0 0 24 24", svg`<path fill="#e3a008" d="M1 3h8l2 2v4H1z"/><path fill="#fdd264" d="M1 6h22v15H1z"/><path fill="#4098d7" d="M5 13.500q0-1 1-1h12q1 0 1 1V21h-3.500v-4h-7v4H5z"/>`)}</div>
      <div class="app">${icon(24, "0 0 24 24", svg`<path fill="#1569b8" d="M0 9 12 0l12 9v14H0z"/><path fill="#fff" d="M1 7.500h22L12 15z"/><path fill="#2fa8e8" d="M0 8l12 7 12-7v15H0z"/><path fill="#4cc2f5" d="M0 23 12 13.500 24 23z"/>`)}</div>
      <div class="app run">${icon(26, "0 0 26 26", svg`<circle cx="13" cy="4.500" r="3.800" fill="#7b83eb"/><circle cx="21" cy="6" r="2.800" fill="#5059c9"/><path fill="#5059c9" d="M15 9.500h9.500V17q-1 4-5 4z"/><path fill="#7b83eb" d="M8 9.500h10V19q-1 5-6 5-4 0-5-4z"/><rect y="6.500" width="13" height="13" rx="1.200" fill="#4b53bc"/><path fill="#fff" d="M3 9.500h7v1.800H7.400V17H5.600v-5.700H3z"/><circle cx="20" cy="20" r="5.500" fill="#8cbd18" stroke="#fff"/><path d="M17.300 20l2 2 3.500-3.700" fill="none" stroke="#fff" stroke-width="1.500"/>`)}</div>
      <div class="app run">${icon(24, "0 0 24 24", svg`<path fill="#0a6fe0" d="M0 0h24v24H0z"/><path fill="#1f9cf5" d="M24 0v24H10z"/><path d="M9 4.500C5 5.500 5 9 7.500 11.500c3.500 3 3.500 6.500-.5 8M14.500 19.500c4.500-1.500 4.500-5 2-7.500-3.500-3-3.500-6 .5-8" fill="none" stroke="#fff" stroke-width="2.300"/><circle cx="12.300" cy="4.800" r="1.400" fill="#fff"/><circle cx="11.300" cy="19" r="1.300" fill="#fff"/>`)}</div>
      <div class="app run">${icon(24, "0 0 24 24", svg`<path fill="#1fae4b" d="M0 0h24v24H0z"/><path d="M3 3h18v18H3z" fill="none" stroke="#fff" stroke-width="1.800"/><path fill="#fff" d="M8.500 7v10l8-5z"/>`)}</div>
      <div class="weather">${icon(26, "0 0 26 24", svg`<path d="M6 21.500a5.500 5.500 0 0 1-.5-10.800A7 7 0 0 1 18.500 9a6.200 6.200 0 0 1 1.500 12.500z" fill="#a9c8f3"/><path d="M6 21.500A5.500 5.500 0 0 1 1 17h24q-1 4-5 4.500z" fill="#7fa5e8"/><path d="M5.500 10.700A7 7 0 0 1 18.500 9q-5 2-5 6-3-4-8-4.300z" fill="#dbe8fb"/><circle cx="22" cy="3.500" r="3" fill="#d1291d"/>`)}</div>
      <div class="degrees"><span>25°C</span><span>Nublado</span></div>
      <div>${icon(12, "0 0 12 12", svg`<path d="M.5 9 6 3.500 11.500 9" fill="none" stroke="#fff" stroke-width="1.300"/>`)}</div>
      <div><svg width="13" height="17" viewBox="0 0 13 17"><path d="M2 2.500q4.500-3 9 0M2 14.500q4.500 3 9 0M1 5h7v7H1zM8 7.500l3-1.500v5L8 9.500" fill="none" stroke="#fff" stroke-width="1.200"/></svg></div>
      <div>${icon(17, "0 0 17 17", svg`<path d="M11 13.500H1l1.500-11L15.500 1 14 11" fill="none" stroke="#fff" stroke-width="1.200"/><path d="M5 9q-.5-4 4-4l-1-1.500M9 5l-1.500 2M11 7q0 4-4 4" fill="none" stroke="#fff" stroke-width="1.200"/><circle cx="13" cy="13.500" r="3.500" fill="#2f7fd8"/>`)}</div>
      <div>${icon(17, "0 0 17 14", svg`<path d="M5.500 4h9.500v7H5V8" fill="none" stroke="#fff" stroke-width="1.200"/><path fill="#fff" d="M7 5.500h6.500v4H7zM15.500 6H17v3h-1.500zM0 2.500h5V5Q4.500 7 3 7v2H2V7Q.5 7 .5 5zM1 0h1v3H1zM3 0h1v3H3z"/>`)}</div>
      <div>${icon(13, "0 0 13 13", svg`<path d="M1 12.500Q1 2 12.500 1" fill="none" stroke="#8b95a5"/><path d="M4 12.500Q4 5 12.500 4M7 12.500Q7 8 12.500 7" fill="none" stroke="#fff" stroke-width="1.200"/><circle cx="11" cy="11" r="1.500" fill="#fff"/>`)}</div>
      <div>${icon(17, "0 0 17 14", svg`<path d="M1 5h2.500L7 1.500v11L3.500 9H1zM9 5q1.500 2 0 4" fill="none" stroke="#fff" stroke-width="1.200"/><path d="M11 3q3 4 0 8M13.500 1.500q4 5.500 0 11" fill="none" stroke="#8b95a5"/>`)}</div>
      <div class="stack">POR<br>PTB</div>
      <div class="stack clock">18:18<br>03/01/2023</div>
      <div>${icon(27, "0 0 27 27", svg`<path fill="#fff" d="M2 3h16v12H8l-3 3v-3H2z"/><path d="M5 6.500h10M5 9h10M5 11.500h7" stroke="#1a2645"/><circle cx="17.500" cy="18" r="8" fill="#2f3233" stroke="#888"/><text x="17.500" y="22.500" font-size="12.500" text-anchor="middle" fill="#fff">1</text>`)}</div>
      <div class="desk"></div>`;
  }
}

@customElement("app-root")
class AppRoot extends LitElement {
  static styles = css`
    :host { display: block; width: 1366px; height: 768px; overflow: hidden; }
    .view { display: flex; height: 580px; }
    .scroll { width: 17px; background: #f1f1f1; display: flex; flex-direction: column; align-items: center; }
    .up { border: 4px solid transparent; border-top: 0; border-bottom: 4px solid #505050; margin-top: 7px; }
    .thumb { width: 13px; height: 43px; background: #c1c1c1; margin-top: 395px; }
    .down { border: 4px solid transparent; border-bottom: 0; border-top: 4px solid #505050; margin-top: 120px; }
  `;
  render() {
    return html`<browser-chrome></browser-chrome>
      <div class="view"><ibge-page></ibge-page><div class="scroll"><div class="up"></div><div class="thumb"></div><div class="down"></div></div></div>
      <task-bar></task-bar>`;
  }
}
